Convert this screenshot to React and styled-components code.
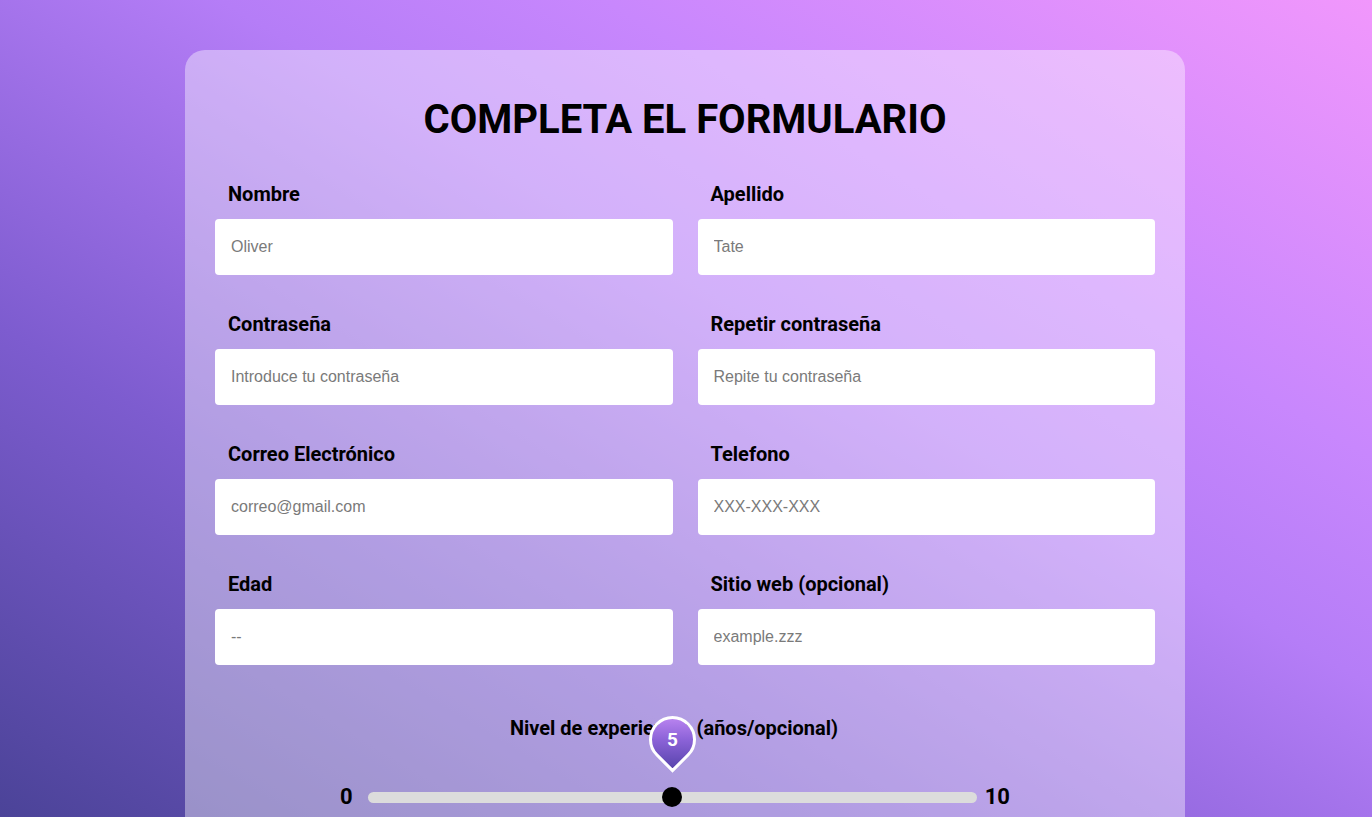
import React, { useState } from 'react';
import styled, { createGlobalStyle } from 'styled-components';

const GlobalStyle = createGlobalStyle`
    html, body {
        margin: 0;
        padding: 0;
    }
    body {
        min-height: 100vh;
        font-family: Roboto, "Liberation Sans", Arial, sans-serif;
        background: linear-gradient(to top right, #4b4398 0%, #7d5ccf 30%, #b57df7 58%, #c887fd 72%, #f197fc 100%);
        background-attachment: fixed;
    }
    * {
        box-sizing: border-box;
    }
`;

const fields = [
    { label: 'Nombre', placeholder: 'Oliver' },
    { label: 'Apellido', placeholder: 'Tate' },
    { label: 'Contraseña', placeholder: 'Introduce tu contraseña', type: 'password' },
    { label: 'Repetir contraseña', placeholder: 'Repite tu contraseña', type: 'password' },
    { label: 'Correo Electrónico', placeholder: 'correo@gmail.com', type: 'email' },
    { label: 'Telefono', placeholder: 'XXX-XXX-XXX', type: 'tel' },
    { label: 'Edad', placeholder: '--' },
    { label: 'Sitio web (opcional)', placeholder: 'example.zzz' },
];

const App = () => {
    const [experience, setExperience] = useState(5);
    const min = 0;
    const max = 10;
    const percent = ((experience - min) / (max - min)) * 100;

    return (
        <>
            <GlobalStyle />
            <Page>
                <FormCard>
                    <Title>COMPLETA EL FORMULARIO</Title>
                    <FieldsGrid>
                        {fields.map(f => (
                            <Field key={f.label}>
                                <Label>{f.label}</Label>
                                <Input type={f.type || 'text'} placeholder={f.placeholder} />
                            </Field>
                        ))}
                    </FieldsGrid>
                    <SliderSection>
                        <SliderLabel>Nivel de experiencia (años/opcional)</SliderLabel>
                        <SliderRow>
                            <SliderEnd $side="left">{min}</SliderEnd>
                            <Track>
                                <ThumbSpot style={{ left: `${percent}%` }}>
                                    <Bubble>
                                        <BubbleValue>{experience}</BubbleValue>
                                    </Bubble>
                                    <Thumb
                                        onClick={() => setExperience(v => (v >= max ? min : v + 1))}
                                    />
                                </ThumbSpot>
                            </Track>
                            <SliderEnd $side="right">{max}</SliderEnd>
                        </SliderRow>
                    </SliderSection>
                </FormCard>
            </Page>
        </>
    );
};

const Page = styled.div`
    display: flex;
    justify-content: center;
    padding: 50px 2px 60px 0;
`;

const FormCard = styled.form`
    width: 1000px;
    padding: 30px 30px 80px;
    background: rgba(255, 255, 255, 0.4);
    border-radius: 20px;
    display: flex;
    flex-direction: column;
    align-items: stretch;
`;

const Title = styled.h1`
    margin: 16px 0 38px;
    text-align: center;
    font-family: Roboto, "Liberation Sans", sans-serif;
    font-weight: 700;
    font-size: 40px;
    line-height: 48px;
    color: #000;
`;

const FieldsGrid = styled.div`
    display: grid;
    grid-template-columns: 1fr 1fr;
    column-gap: 25px;
    row-gap: 37px;
`;

const Field = styled.div`
    display: flex;
    flex-direction: column;
`;

const Label = styled.label`
    padding-left: 13px;
    margin-bottom: 13px;
    font-family: Roboto, "Liberation Sans", sans-serif;
    font-weight: 700;
    font-size: 20px;
    line-height: 24px;
    color: #000;
`;

const Input = styled.input`
    height: 56px;
    width: 100%;
    padding: 0 16px;
    border: none;
    border-radius: 4px;
    background: #fff;
    font-family: "Liberation Sans", Arial, sans-serif;
    font-size: 16px;
    color: #222;
    outline: none;
    &::placeholder {
        color: #7a7a7a;
    }
`;

const SliderSection = styled.div`
    margin-top: 51px;
    display: flex;
    flex-direction: column;
    align-items: center;
    padding-right: 22px;
`;

const SliderLabel = styled.div`
    font-family: Roboto, "Liberation Sans", sans-serif;
    font-weight: 700;
    font-size: 20px;
    line-height: 24px;
    color: #000;
`;

const SliderRow = styled.div`
    margin-top: 44px;
    display: flex;
    align-items: center;
    margin-left: 2px;
`;

const SliderEnd = styled.span`
    font-family: Roboto, "Liberation Sans", sans-serif;
    font-weight: 700;
    font-size: 22px;
    line-height: 26px;
    color: #000;
    margin: ${p => (p.$side === 'left' ? '0 15px 0 0' : '0 0 0 8px')};
`;

const Track = styled.div`
    position: relative;
    width: 609px;
    height: 11px;
    border-radius: 6px;
    background: #dcdcdc;
`;

const ThumbSpot = styled.div`
    position: absolute;
    top: 50%;
    width: 0;
    height: 0;
`;

const Thumb = styled.div`
    position: absolute;
    left: -10px;
    top: -10px;
    width: 20px;
    height: 20px;
    border-radius: 50%;
    background: #000;
    cursor: pointer;
`;

const Bubble = styled.div`
    position: absolute;
    left: -23.5px;
    top: -81px;
    width: 47px;
    height: 47px;
    border: 3px solid #fff;
    border-radius: 50% 50% 0 50%;
    transform: rotate(45deg);
    background: linear-gradient(135deg, #c98ff8 0%, #8c63d8 50%, #5844ad 100%);
    display: flex;
    align-items: center;
    justify-content: center;
`;

const BubbleValue = styled.span`
    transform: rotate(-45deg);
    font-family: Roboto, "Liberation Sans", sans-serif;
    font-weight: 700;
    font-size: 19px;
    color: #fff;
`;

export default App;
